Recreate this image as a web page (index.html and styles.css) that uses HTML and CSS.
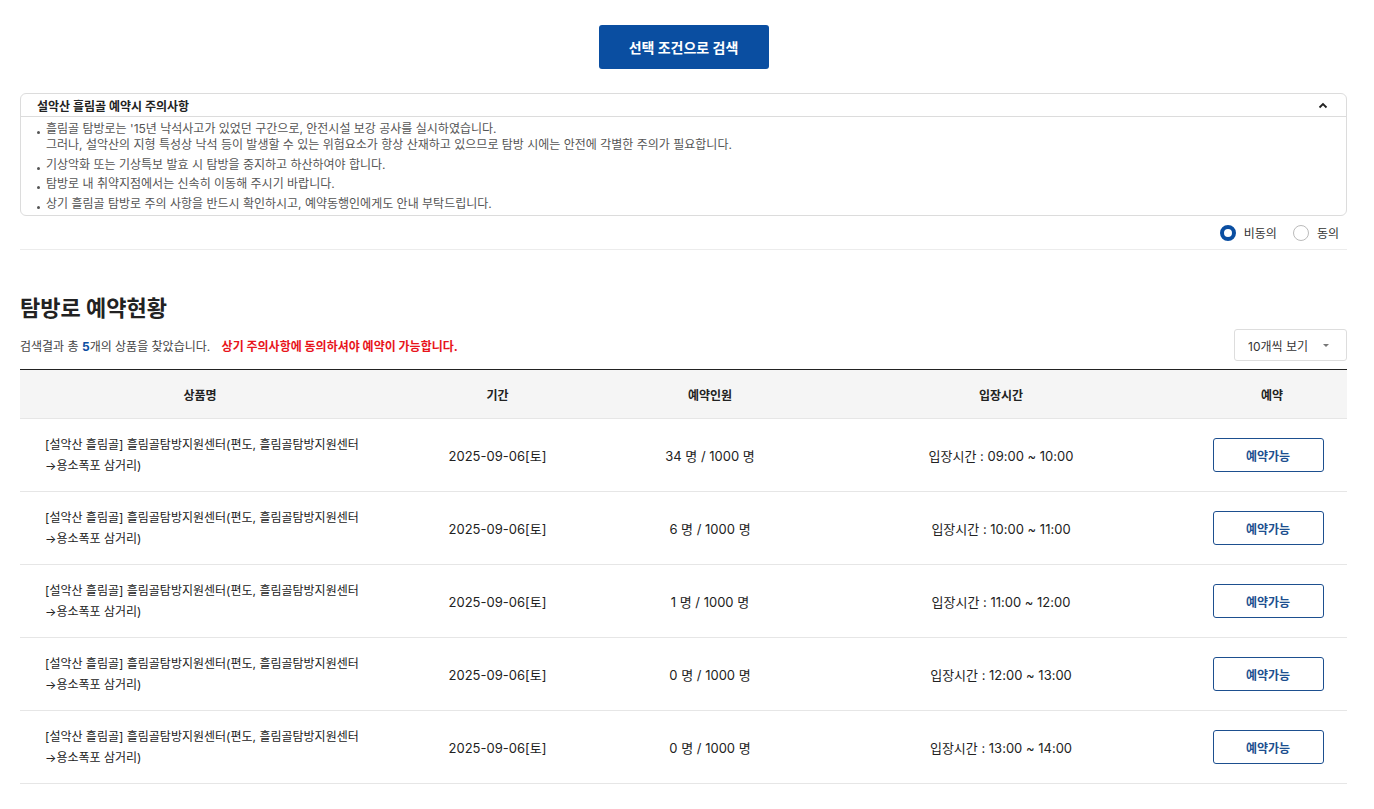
FILE: index.html
```html
<!DOCTYPE html>
<html lang="ko">
<head>
    <meta charset="UTF-8">
    <meta name="viewport" content="width=device-width, initial-scale=1.0">
    <title>탐방로 예약현황</title>
    <link rel="stylesheet" href="styles.css">
</head>
<body>
    <div class="wrap">
        <div class="search-row">
            <button class="btn-search">선택 조건으로 검색</button>
        </div>

        <div class="notice">
            <div class="notice-head">
                <strong>설악산 흘림골 예약시 주의사항</strong>
                <svg class="chev" width="10" height="7" viewBox="0 0 10 7"><path d="M1.5 5.5 L5 2 L8.5 5.5" fill="none" stroke="#222" stroke-width="1.8"/></svg>
            </div>
            <ul class="notice-list">
                <li>흘림골 탐방로는 '15년 낙석사고가 있었던 구간으로, 안전시설 보강 공사를 실시하였습니다.<br>그러나, 설악산의 지형 특성상 낙석 등이 발생할 수 있는 위험요소가 항상 산재하고 있으므로 탐방 시에는 안전에 각별한 주의가 필요합니다.</li>
                <li>기상악화 또는 기상특보 발효 시 탐방을 중지하고 하산하여야 합니다.</li>
                <li>탐방로 내 취약지점에서는 신속히 이동해 주시기 바랍니다.</li>
                <li>상기 흘림골 탐방로 주의 사항을 반드시 확인하시고, 예약동행인에게도 안내 부탁드립니다.</li>
            </ul>
        </div>

        <div class="agree">
            <label class="radio"><span class="dot on"></span>비동의</label>
            <label class="radio"><span class="dot"></span>동의</label>
        </div>

        <h2 class="title">탐방로 예약현황</h2>

        <div class="result-bar">
            <p class="result">검색결과 총 <b>5</b>개의 상품을 찾았습니다. <span class="warn">상기 주의사항에 동의하셔야 예약이 가능합니다.</span></p>
            <div class="select">10개씩 보기 <span class="caret"></span></div>
        </div>

        <table class="list">
            <colgroup>
                <col style="width:360px">
                <col style="width:235px">
                <col style="width:190px">
                <col style="width:392px">
                <col style="width:150px">
            </colgroup>
            <thead>
                <tr><th>상품명</th><th>기간</th><th>예약인원</th><th>입장시간</th><th>예약</th></tr>
            </thead>
            <tbody id="rows"></tbody>
        </table>
    </div>

    <script>
        const rows = [
            ['34', '09:00 ~ 10:00'],
            ['6', '10:00 ~ 11:00'],
            ['1', '11:00 ~ 12:00'],
            ['0', '12:00 ~ 13:00'],
            ['0', '13:00 ~ 14:00']
        ];
        const tbody = document.getElementById('rows');
        rows.forEach(r => {
            const tr = document.createElement('tr');
            tr.innerHTML =
                '<td class="name">[설악산 흘림골] 흘림골탐방지원센터(편도, 흘림골탐방지원센터<br>→용소폭포 삼거리)</td>' +
                '<td>2025-09-06[토]</td>' +
                '<td>' + r[0] + ' 명 / 1000 명</td>' +
                '<td>입장시간 : ' + r[1] + '</td>' +
                '<td><button class="btn-book">예약가능</button></td>';
            tbody.appendChild(tr);
        });
    </script>
</body>
</html>
```

FILE: styles.css
```css
body {
    margin: 0;
    font-family: Inter, "Noto Sans CJK KR", sans-serif;
    color: #222;
    background: #fff;
}
.wrap {
    padding: 25px 27px 0 20px;
}
.search-row {
    display: flex;
    justify-content: center;
}
.btn-search {
    width: 170px;
    height: 44px;
    background: #0a4ea1;
    color: #fff;
    border: none;
    border-radius: 3px;
    font-family: inherit;
    font-size: 14px;
    font-weight: 700;
}
.notice {
    margin-top: 24px;
    border: 1px solid #dcdcdc;
    border-radius: 6px;
}
.notice-head {
    display: flex;
    justify-content: space-between;
    align-items: center;
    height: 22px;
    padding: 0 18px 0 16px;
    border-bottom: 1px solid #dcdcdc;
    font-size: 12px;
}
.notice-list {
    list-style: none;
    margin: 0;
    padding: 4px 16px 0 16px;
    font-size: 12px;
    color: #555;
}
.notice-list li {
    position: relative;
    padding-left: 9px;
    line-height: 16px;
    margin-bottom: 3.5px;
}
.notice-list li::before {
    content: "";
    position: absolute;
    left: 0;
    top: 10px;
    width: 3px;
    height: 3px;
    border-radius: 50%;
    background: #555;
}
.agree {
    display: flex;
    justify-content: flex-end;
    gap: 16px;
    padding: 8px 8px 8px 0;
    border-bottom: 1px solid #ececec;
}
.radio {
    display: flex;
    align-items: center;
    gap: 8px;
    font-size: 12px;
    color: #333;
}
.dot {
    box-sizing: border-box;
    width: 16px;
    height: 16px;
    border-radius: 50%;
    border: 1px solid #bbb;
    background: #fff;
}
.dot.on {
    border: 4px solid #0a4ea1;
}
.title {
    margin: 43px 0 0;
    font-size: 22px;
    font-weight: 700;
    color: #222;
    line-height: 30px;
}
.result-bar {
    display: flex;
    justify-content: space-between;
    align-items: center;
    margin-top: 6px;
}
.result {
    margin: 0;
    font-size: 12px;
    color: #444;
}
.result b {
    color: #0a4ea1;
}
.warn {
    color: #e8141b;
    font-weight: 700;
    margin-left: 8px;
}
.select {
    box-sizing: border-box;
    width: 113px;
    height: 32px;
    border: 1px solid #ddd;
    border-radius: 3px;
    display: flex;
    align-items: center;
    padding-left: 13px;
    font-size: 12px;
    color: #333;
    position: relative;
}
.caret {
    position: absolute;
    right: 17px;
    top: 14px;
    border-left: 3px solid transparent;
    border-right: 3px solid transparent;
    border-top: 3px solid #777;
}
.list {
    width: 100%;
    margin-top: 8px;
    border-collapse: collapse;
    table-layout: fixed;
    border-top: 1px solid #222;
    font-size: 13px;
}
.list th {
    height: 48px;
    padding: 0;
    background: #f5f5f5;
    font-size: 12px;
    font-weight: 700;
    color: #222;
    border-bottom: 1px solid #e6e6e6;
}
.list td {
    height: 72px;
    text-align: center;
    color: #222;
    border-bottom: 1px solid #e6e6e6;
    padding: 0;
}
.list td.name {
    text-align: left;
    padding-left: 25px;
    font-size: 12px;
    line-height: 21px;
}
.btn-book {
    width: 111px;
    height: 34px;
    background: #fff;
    border: 1px solid #1d4f8f;
    border-radius: 3px;
    color: #1d4f8f;
    font-family: inherit;
    font-size: 12px;
    font-weight: 700;
    margin-right: 8px;
}
```
